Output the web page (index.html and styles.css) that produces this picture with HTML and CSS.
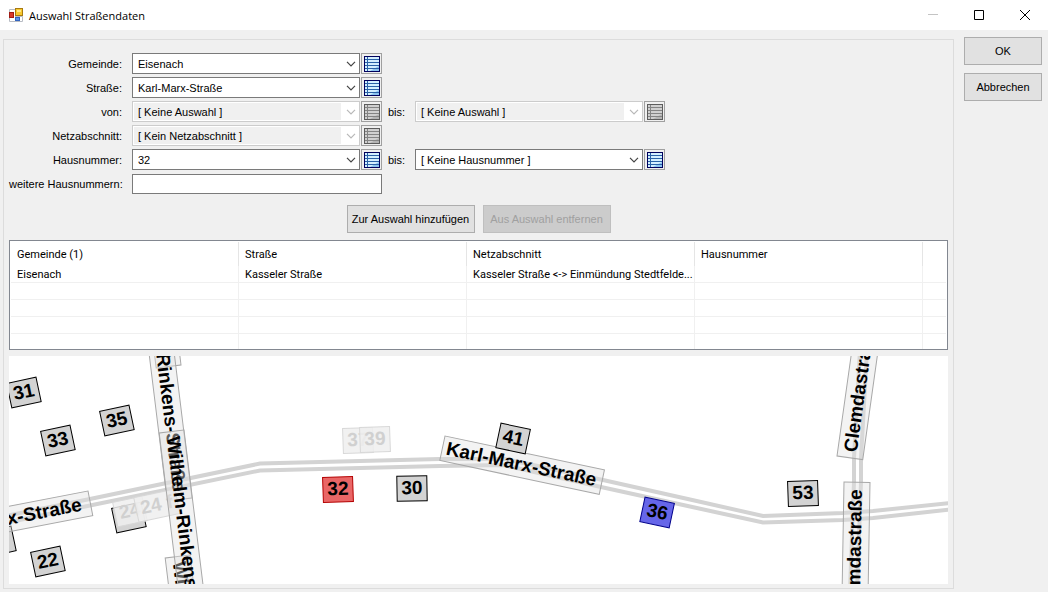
FILE: index.html
```html
<!DOCTYPE html>
<html lang="de">
<head>
    <meta charset="utf-8">
    <title>Auswahl Straßendaten</title>
    <link rel="stylesheet" href="styles.css">
</head>
<body>
    <svg class="symbols" aria-hidden="true">
        <symbol id="list" viewBox="0 0 16 16">
            <rect class="sheet" x="0" y="0" width="16" height="16"/>
            <path class="shade" d="M15 10v5H6z"/>
            <path class="lines" d="M1 3.5h14M1 6.5h14M1 9.5h14M1 12.5h14M3.5 1v14"/>
            <rect class="edge" x=".5" y=".5" width="15" height="15"/>
        </symbol>
        <symbol id="chevron" viewBox="0 0 10 6">
            <path d="M1 .8l4 4 4-4" fill="none" stroke="currentColor" stroke-width="1.2"/>
        </symbol>
    </svg>

    <header class="titlebar">
        <svg class="app-icon" viewBox="0 0 14 14" aria-hidden="true">
            <path d="M.5 1.5h6v12h-6zM6.500 8.500h7v5h-7z" fill="#fff" stroke="#b8bcc4"/>
            <rect x="6.500" y=".5" width="7" height="7" fill="#f7c82e" stroke="#a87a10"/>
            <path d="M8 2h4v2H8z" fill="#ffe88a"/>
            <rect x=".5" y="4.500" width="4" height="5" fill="#d93a2b" stroke="#a01c14"/>
            <rect x="6.500" y="9.500" width="4" height="3" fill="#5b93e8" stroke="#3465c0"/>
        </svg>
        <h1>Auswahl Straßendaten</h1>
        <div class="window-buttons">
            <button type="button" aria-label="Minimieren" disabled><svg viewBox="0 0 10 10"><path d="M0 4.500h10"/></svg></button>
            <button type="button" aria-label="Maximieren"><svg viewBox="0 0 10 10"><path d="M.5.5h9v9h-9z"/></svg></button>
            <button type="button" aria-label="Schließen"><svg viewBox="0 0 10 10"><path d="M0 0l10 10M10 0L0 10"/></svg></button>
        </div>
    </header>

    <main class="dialog">
        <section class="panel">
            <form class="fields">
                <div class="row">
                    <label class="name" for="gemeinde">Gemeinde:</label>
                    <div class="combo">
                        <select id="gemeinde"><option>Eisenach</option></select>
                        <svg><use href="#chevron"/></svg>
                    </div>
                    <button type="button" class="pick" aria-label="Gemeinde auswählen"><svg><use href="#list"/></svg></button>
                </div>
                <div class="row">
                    <label class="name" for="strasse">Straße:</label>
                    <div class="combo">
                        <select id="strasse"><option>Karl-Marx-Straße</option></select>
                        <svg><use href="#chevron"/></svg>
                    </div>
                    <button type="button" class="pick" aria-label="Straße auswählen"><svg><use href="#list"/></svg></button>
                </div>
                <div class="row">
                    <label class="name" for="von">von:</label>
                    <div class="combo off">
                        <select id="von" disabled><option>[ Keine Auswahl ]</option></select>
                        <svg><use href="#chevron"/></svg>
                    </div>
                    <button type="button" class="pick" aria-label="Von auswählen" disabled><svg><use href="#list"/></svg></button>
                    <label class="to" for="von-bis">bis:</label>
                    <div class="combo off">
                        <select id="von-bis" disabled><option>[ Keine Auswahl ]</option></select>
                        <svg><use href="#chevron"/></svg>
                    </div>
                    <button type="button" class="pick" aria-label="Bis auswählen" disabled><svg><use href="#list"/></svg></button>
                </div>
                <div class="row">
                    <label class="name" for="netz">Netzabschnitt:</label>
                    <div class="combo off">
                        <select id="netz" disabled><option>[ Kein Netzabschnitt ]</option></select>
                        <svg><use href="#chevron"/></svg>
                    </div>
                    <button type="button" class="pick" aria-label="Netzabschnitt auswählen" disabled><svg><use href="#list"/></svg></button>
                </div>
                <div class="row">
                    <label class="name" for="nummer">Hausnummer:</label>
                    <div class="combo">
                        <select id="nummer"><option>32</option></select>
                        <svg><use href="#chevron"/></svg>
                    </div>
                    <button type="button" class="pick" aria-label="Hausnummer auswählen"><svg><use href="#list"/></svg></button>
                    <label class="to" for="nummer-bis">bis:</label>
                    <div class="combo">
                        <select id="nummer-bis"><option>[ Keine Hausnummer ]</option></select>
                        <svg><use href="#chevron"/></svg>
                    </div>
                    <button type="button" class="pick" aria-label="Letzte Hausnummer auswählen"><svg><use href="#list"/></svg></button>
                </div>
                <div class="row">
                    <label class="name" for="weitere">weitere Hausnummern:</label>
                    <input type="text" id="weitere">
                </div>
            </form>

            <div class="actions">
                <button type="button" class="btn">Zur Auswahl hinzufügen</button>
                <button type="button" class="btn" disabled>Aus Auswahl entfernen</button>
            </div>

            <div class="list">
                <table>
                    <colgroup><col class="wide"><col class="wide"><col class="wide"><col class="wide"><col></colgroup>
                    <thead>
                        <tr><th>Gemeinde (1)</th><th>Straße</th><th>Netzabschnitt</th><th>Hausnummer</th><th></th></tr>
                    </thead>
                    <tbody>
                        <tr><td>Eisenach</td><td>Kasseler Straße</td><td>Kasseler Straße &lt;-&gt; Einmündung Stedtfelde...</td><td></td><td></td></tr>
                        <tr><td></td><td></td><td></td><td></td><td></td></tr>
                        <tr><td></td><td></td><td></td><td></td><td></td></tr>
                        <tr><td></td><td></td><td></td><td></td><td></td></tr>
                        <tr><td></td><td></td><td></td><td></td><td></td></tr>
                    </tbody>
                </table>
            </div>

            <svg class="map" viewBox="9 356 939 228" preserveAspectRatio="xMinYMin slice" role="img" aria-label="Karte">
                <!-- roads -->
                <g class="road">
                    <path d="M0 517L90 499L260 463.500L440 459L505 459L603 480L690 499.500L763 516L843 513L873 511L950 503"/>
                    <path d="M0 524L90 505.500L260 470.500L440 466L503 465L601 487L690 506.500L763 522.500L843 520L873 518L950 509.500"/>
                    <path d="M860 350L854 458V482L850 590M867 350L861 458V482L857 590"/>
                </g>

                <!-- houses -->
                <g class="house">
                    <g transform="translate(24 393) rotate(-12)"><rect x="-15" y="-13" width="30" height="25"/><text y="5">31</text></g>
                    <g transform="translate(58 441) rotate(-12)"><rect x="-15" y="-13" width="30" height="25"/><text y="5">33</text></g>
                    <g transform="translate(117 421) rotate(-12)"><rect x="-15" y="-13" width="30" height="25"/><text y="5">35</text></g>
                    <g transform="translate(48 562) rotate(-12)"><rect x="-15" y="-13" width="30" height="25"/><text y="5">22</text></g>
                    <g transform="translate(-1 542) rotate(-12)"><rect x="-15" y="-13" width="30" height="25"/></g>
                    <g transform="translate(129 518) rotate(-12)"><rect x="-15" y="-13" width="30" height="25"/></g>
                    <g transform="translate(412 489) rotate(-1)"><rect x="-15" y="-13" width="30" height="25"/><text y="5">30</text></g>
                    <g transform="translate(803 494) rotate(-2)"><rect x="-15" y="-13" width="30" height="25"/><text y="5">53</text></g>
                    <g class="start" transform="translate(338 490) rotate(-2)"><rect x="-15" y="-13" width="30" height="25"/><text y="5">32</text></g>
                    <g class="end" transform="translate(657 513) rotate(12)"><rect x="-15" y="-13" width="30" height="25"/><text y="5">36</text></g>
                </g>

                <!-- street names -->
                <g class="street">
                    <g transform="translate(181 365) rotate(83)"><rect x="-220" y="0" width="220" height="25"/><text class="last" x="-8" y="18">Wilhelm-Rinkens-Straße</text></g>
                    <g transform="translate(192 498) rotate(83)"><rect x="-220" y="0" width="220" height="25"/><text class="last" x="-8" y="18">Wilhelm-Rinkens-Straße</text></g>
                    <g transform="translate(190 555) rotate(83)"><rect x="0" y="0" width="220" height="25"/><text x="5" y="18">Wilhelm-Rinkens-Straße</text></g>
                </g>

                <!-- houses outside the range -->
                <g class="house faded">
                    <g transform="translate(358 441) rotate(-2)"><rect x="-15" y="-13" width="30" height="25"/><text y="5">37</text></g>
                    <g transform="translate(375 440) rotate(-2)"><rect x="-15" y="-13" width="30" height="25"/><text y="5">39</text></g>
                    <g transform="translate(130 512) rotate(-12)"><rect x="-15" y="-13" width="30" height="25"/><text y="5">24</text></g>
                    <g transform="translate(157 506) rotate(-12)"><rect x="-21" y="-13" width="42" height="25"/><text y="5">24 f</text></g>
                </g>

                <g class="street">
                    <g transform="translate(184 430) rotate(83)"><rect x="0" y="0" width="220" height="25"/><text x="5" y="18">Wilhelm-Rinkens-Straße</text></g>
                    <g transform="translate(88 491) rotate(-11)"><rect x="-163" y="0" width="163" height="25"/><text class="last" x="-9" y="18">Karl-Marx-Straße</text></g>
                    <g transform="translate(445 436) rotate(12)"><rect x="0" y="0" width="163" height="25"/><text x="4" y="18">Karl-Marx-Straße</text></g>
                    <g transform="translate(837 456) rotate(-82)"><rect x="0" y="0" width="138" height="26"/><text x="6" y="19">Clemdastraße</text></g>
                    <g transform="translate(844 482) rotate(-89)"><rect x="-138" y="0" width="138" height="26"/><text class="last" x="-7" y="18">Clemdastraße</text></g>
                </g>

                <g class="house">
                    <g transform="translate(513 439) rotate(12)"><rect x="-15" y="-13" width="30" height="25"/><text y="5">41</text></g>
                </g>
            </svg>
        </section>

        <aside class="side">
            <button type="button" class="btn">OK</button>
            <button type="button" class="btn">Abbrechen</button>
        </aside>
    </main>
</body>
</html>
```
FILE: styles.css
```css
* {
    box-sizing: border-box;
}

body {
    margin: 0;
    height: 100vh;
    display: flex;
    flex-direction: column;
    background: #f0f0f0;
    color: #000;
    font-family: "Liberation Sans", Arial, sans-serif;
    font-size: 11px;
}

button, select, input {
    margin: 0;
    font: inherit;
    color: inherit;
    border-radius: 0;
}

.symbols {
    position: absolute;
    width: 0;
    height: 0;
}

/* title bar */
.titlebar {
    display: flex;
    align-items: center;
    height: 30px;
    padding-left: 9px;
    background: #fff;
}

.titlebar h1 {
    flex: 1;
    margin: 0 0 0 6px;
    font-family: "Open Sans", sans-serif;
    font-size: 11px;
    font-weight: normal;
}

.app-icon {
    width: 14px;
    height: 14px;
}

.window-buttons {
    display: flex;
}

.window-buttons button {
    display: flex;
    align-items: center;
    justify-content: center;
    width: 46px;
    height: 28px;
    padding: 0;
    border: 0;
    background: none;
}

.window-buttons button:disabled {
    color: #c4c4c4;
}

.window-buttons svg {
    width: 10px;
    height: 10px;
    fill: none;
    stroke: currentColor;
}

/* dialog */
.dialog {
    flex: 1;
    display: flex;
    gap: 10px;
    min-height: 0;
    padding: 7px 6px 3px 3px;
}

.panel {
    flex: 1;
    display: flex;
    flex-direction: column;
    min-width: 0;
    margin-top: 2px;
    padding: 13px 5px 4px;
    border: 1px solid #dcdcdc;
}

.side {
    display: flex;
    flex-direction: column;
    gap: 8px;
    width: 78px;
}

.btn {
    height: 28px;
    padding: 0;
    border: 1px solid #adadad;
    background: #e1e1e1;
}

.btn:disabled {
    border-color: #bfbfbf;
    background: #ccc;
    color: #a0a0a0;
}

/* form */
.fields {
    display: flex;
    flex-direction: column;
    gap: 3px;
}

.row {
    display: flex;
    align-items: center;
    height: 21px;
}

.name {
    width: 113px;
    margin-right: 10px;
    text-align: right;
    white-space: nowrap;
}

.to {
    width: 27px;
    margin-left: 6px;
}

.combo {
    position: relative;
    width: 228px;
}

.combo select {
    display: block;
    width: 100%;
    height: 21px;
    padding: 0 20px 0 5px;
    border: 1px solid #7a7a7a;
    background: #fff;
    appearance: none;
}

.combo select:disabled {
    border-color: #ccc;
    background: linear-gradient(#f0f0f0, #f0f0f0) 1px 1px / calc(100% - 19px) calc(100% - 2px) no-repeat #fff;
    opacity: 1;
}

.combo svg {
    position: absolute;
    top: 8px;
    right: 4px;
    width: 10px;
    height: 6px;
    color: #444;
    pointer-events: none;
}

.combo.off svg {
    color: #b8b8b8;
}

.pick {
    display: flex;
    width: 21px;
    height: 21px;
    margin-left: 1px;
    padding: 2px 1px 1px 2px;
    border: 1px solid #a0a0a0;
    background: #f0f0f0;
}

.pick svg {
    flex: none;
    width: 16px;
    height: 16px;
    --sheet: #d4efff;
    --shade: #8cc4f0;
    --lines: #2a62a8;
    --edge: #00005c;
}

.pick:disabled svg {
    --sheet: #d0d0d0;
    --shade: #b4b4b4;
    --lines: #848484;
    --edge: #5c5c5c;
}

.sheet { fill: var(--sheet); }
.shade { fill: var(--shade); }
.lines { fill: none; stroke: var(--lines); }
.edge { fill: none; stroke: var(--edge); }

#weitere {
    width: 250px;
    height: 20px;
    padding: 0 5px;
    border: 1px solid #7a7a7a;
    background: #fff;
}

.actions {
    display: flex;
    justify-content: center;
    gap: 8px;
    margin: 11px 0 7px;
}

.actions .btn {
    width: 128px;
}

/* list */
.list {
    height: 110px;
    padding: 1px;
    border: 1px solid #828790;
    background: #fff;
    font-family: Roboto, "Liberation Sans", sans-serif;
    overflow: hidden;
}

.list table {
    width: 100%;
    table-layout: fixed;
    border-collapse: separate;
    border-spacing: 0;
}

.wide {
    width: 228px;
}

.list th, .list td {
    height: 17px;
    padding: 1px 0 0 6px;
    border-right: 1px solid #f0f0f0;
    border-bottom: 1px solid #f0f0f0;
    font-weight: normal;
    text-align: left;
    white-space: nowrap;
}

.list th {
    height: 24px;
    border-right-color: #e5e5e5;
    border-bottom: 0;
}

.list th:last-child, .list td:last-child {
    border-right: 0;
}

.list tr:last-child td {
    border-bottom: 0;
}

/* map */
.map {
    flex: 1;
    width: 100%;
    min-height: 0;
    margin-top: 6px;
    background: #fff;
    font-size: 19px;
    font-weight: bold;
}

.road {
    fill: none;
    stroke: #d3d3d3;
    stroke-width: 4;
}

.house rect {
    fill: #d3d3d3;
    stroke: #000;
}

.house text {
    text-anchor: middle;
}

.house .start rect {
    fill: #e96666;
    stroke: #b40000;
}

.house .end rect {
    fill: #6666e9;
    stroke: #00008b;
}

.faded rect {
    fill: #eee;
    fill-opacity: .85;
    stroke: #d8d8d8;
}

.faded text {
    fill: #d0d0d0;
}

.street rect {
    fill: #e0e0e0;
    fill-opacity: .4;
    stroke: #a8a8a8;
}

.street .last {
    text-anchor: end;
}
```
